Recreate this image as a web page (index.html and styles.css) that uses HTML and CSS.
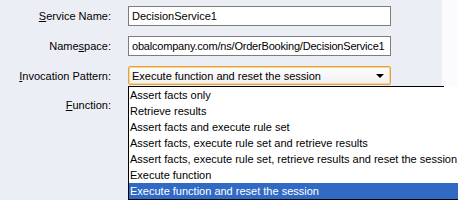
FILE: index.html
```html
<!DOCTYPE html>
<html lang="en">
<head>
  <meta charset="UTF-8" />
  <title>Decision Service</title>
  <link rel="stylesheet" href="styles.css">
</head>
<body>
  <div class="panel">
    <div class="form">
      <label class="label"><u>S</u>ervice Name:</label>
      <div class="field">DecisionService1</div>

      <label class="label">Name<u>s</u>pace:</label>
      <div class="field tight">obalcompany.com/ns/OrderBooking/DecisionService1</div>

      <label class="label"><u>I</u>nvocation Pattern:</label>
      <div class="combo">
        <span>Execute function and reset the session</span>
        <span class="arrow"></span>
      </div>

      <label class="label func"><u>F</u>unction:</label>
      <div class="field-empty"></div>
    </div>
  </div>

  <ul class="droplist">
    <li>Assert facts only</li>
    <li>Retrieve results</li>
    <li>Assert facts and execute rule set</li>
    <li>Assert facts, execute rule set and retrieve results</li>
    <li>Assert facts, execute rule set, retrieve results and reset the session</li>
    <li>Execute function</li>
    <li class="selected">Execute function and reset the session</li>
  </ul>
</body>
</html>
```

FILE: styles.css
```css
* {
  margin: 0;
  padding: 0;
  box-sizing: border-box;
}

body {
  width: 458px;
  height: 200px;
  overflow: hidden;
  background: #fbfbfd;
  font-family: "Liberation Sans", Arial, sans-serif;
  font-size: 11px;
  color: #000;
  position: relative;
}

.panel {
  width: 442px;
  height: 200px;
  background: #eceef6;
}

.form {
  display: grid;
  grid-template-columns: 111px 263px;
  column-gap: 17px;
  row-gap: 10px;
  padding-top: 6px;
  align-items: center;
}

.label {
  text-align: right;
  white-space: nowrap;
}

.field {
  height: 20px;
  background: #fff;
  border: 1px solid #7c7c7c;
  padding: 0 3px;
  line-height: 18px;
  white-space: nowrap;
  overflow: hidden;
}

/* длинный namespace чуть плотнее, чтобы влез */
.field.tight {
  letter-spacing: -0.2px;
  padding: 0 2px 0 3px;
}

.combo {
  height: 19px;
  border: 1px solid #e3a43b;
  box-shadow: inset 0 0 0 1px #f9d58d;
  border-radius: 2px;
  background: linear-gradient(#fdfdfd, #f1f1f1);
  display: flex;
  align-items: center;
  justify-content: space-between;
  padding: 0 5px 0 3px;
  white-space: nowrap;
}

/* стрелка комбобокса */
.arrow {
  width: 0;
  height: 0;
  border-left: 4px solid transparent;
  border-right: 4px solid transparent;
  border-top: 4px solid #000;
  margin-right: 1px;
}

.field-empty {
  height: 20px;
}

/* выпадающий список поверх формы */
.droplist {
  position: absolute;
  left: 128px;
  top: 86px;
  width: 340px;
  list-style: none;
  background: #fff;
  border-left: 1px solid #000;
  border-bottom: 1px solid #000;
  padding-top: 1px;
}

.droplist::before {
  content: "";
  position: absolute;
  left: -1px;
  top: 0;
  width: 316px;
  height: 1px;
  background: #000;
}

.droplist li {
  height: 16px;
  line-height: 16px;
  padding-left: 1px;
  white-space: nowrap;
}

.droplist li.selected {
  background: #316ac5;
  color: #fff;
}
```
